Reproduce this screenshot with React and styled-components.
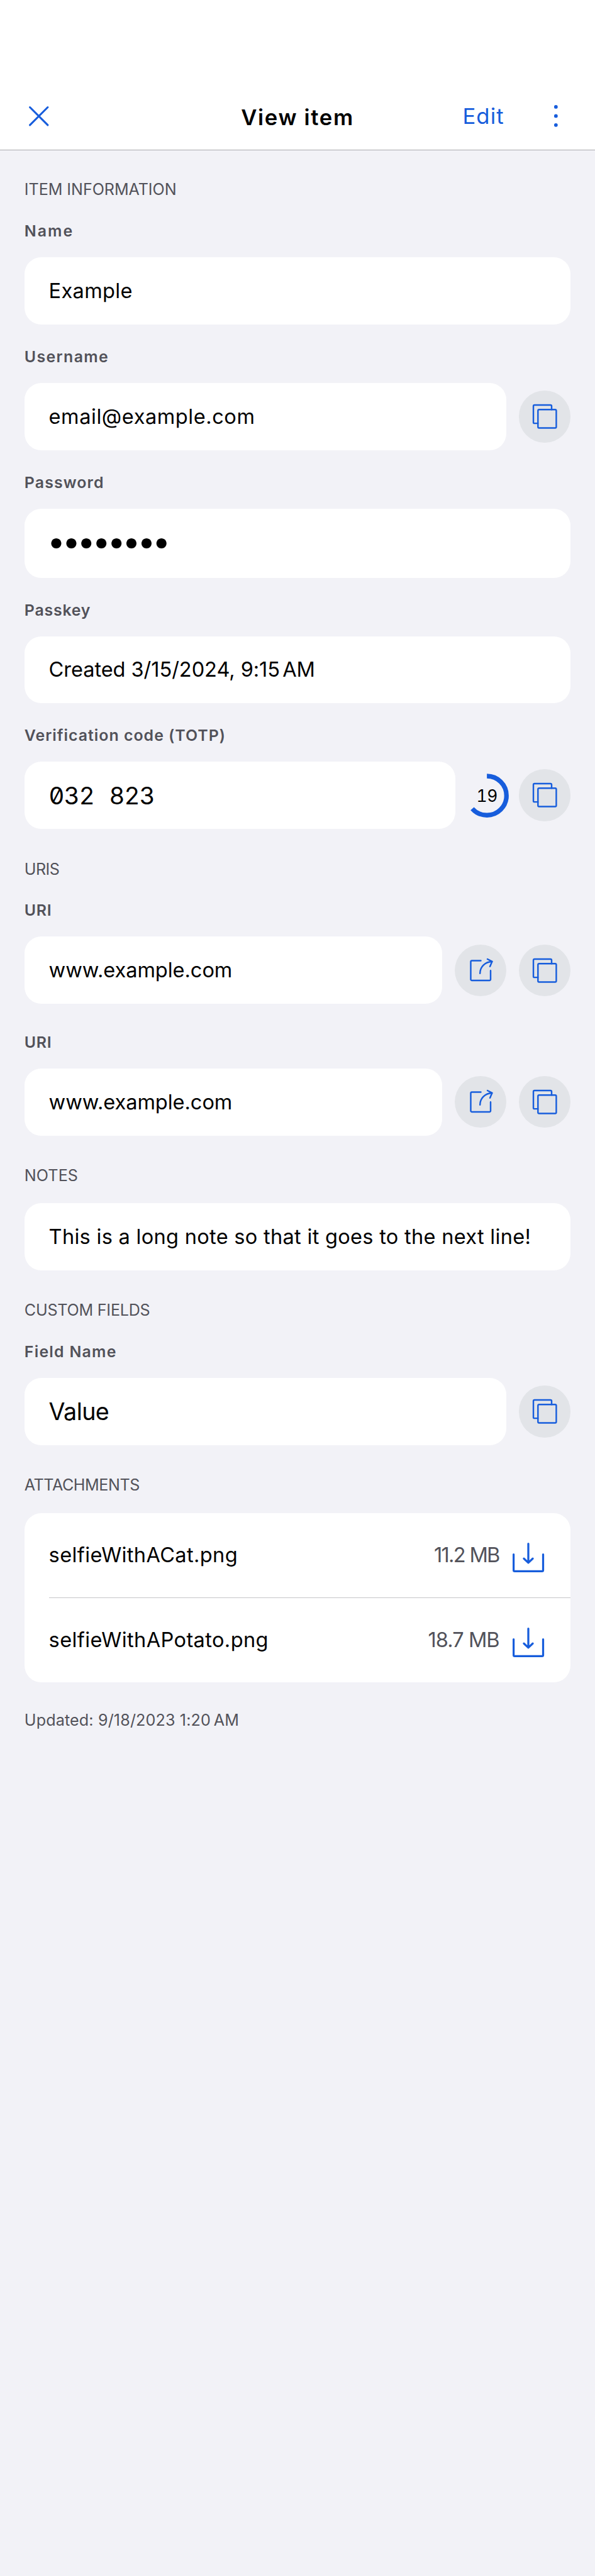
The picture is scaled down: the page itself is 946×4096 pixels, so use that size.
import React from "react";
import styled, { createGlobalStyle } from "styled-components";

// The screen is designed on a 390pt wide canvas and shown 946px wide.
const pt = (n) => `${((n * 946) / 390).toFixed(3)}px`;

const color = {
  page: "#f2f2f7",
  card: "#ffffff",
  text: "#000000",
  muted: "#52525a",
  accent: "#175ddc",
  button: "#e2e4e8",
  headerLine: "#a9a9ad",
  divider: "#c6c6c8",
};

const GlobalStyle = createGlobalStyle`
  *, *::before, *::after { box-sizing: border-box; }
  body {
    margin: 0;
    background: ${color.page};
    color: ${color.text};
    font-family: Inter, "Open Sans", sans-serif;
  }
  h1, h2, p { margin: 0; font-weight: 400; }
  button { border: 0; padding: 0; background: none; font: inherit; color: inherit; }
  svg { display: block; overflow: visible; }
`;

const Screen = styled.div`
  display: flex;
  flex-direction: column;
  min-height: 4096px;
  background: ${color.page};
`;

const Header = styled.header`
  padding-top: ${pt(54)};
  background: ${color.card};
  border-bottom: 1px solid ${color.headerLine};
`;

const NavBar = styled.div`
  display: grid;
  grid-template-columns: 1fr auto 1fr;
  align-items: center;
  height: ${pt(44)};
  padding: 0 ${pt(24.4)} 0 ${pt(19)};
  color: ${color.accent};
`;

const CloseButton = styled.button`
  justify-self: start;
`;

const Title = styled.h1`
  padding: ${pt(1.2)} 0 0 ${pt(5.4)};
  color: ${color.text};
  font-size: 34.67px;
  font-weight: 600;
  line-height: ${pt(20)};
  letter-spacing: 1.64px;
  white-space: nowrap;
`;

const NavActions = styled.div`
  display: flex;
  align-items: center;
  justify-self: end;
  gap: ${pt(32.8)};
`;

const EditButton = styled.button`
  font-size: 34.67px;
  line-height: ${pt(20)};
  letter-spacing: 1.1px;
`;

const Content = styled.main`
  display: flex;
  flex-direction: column;
  gap: ${pt(18.333)};
  padding: ${pt(18)} ${pt(16)} 0;
`;

const Section = styled.section`
  display: flex;
  flex-direction: column;
`;

const SectionTitle = styled.h2`
  margin-bottom: ${(p) => pt(p.$tight ? 10 : 11.167)};
  color: ${color.muted};
  font-size: 25.14px;
  line-height: ${pt(16)};
  letter-spacing: ${(p) => p.$track}px;
`;

const FieldList = styled.div`
  display: flex;
  flex-direction: column;
  gap: ${(p) => pt(p.$loose ? 17.167 : 13.167)};
`;

const FieldBlock = styled.div`
  display: flex;
  flex-direction: column;
  gap: ${pt(9.167)};
`;

const Label = styled.p`
  color: ${color.muted};
  font-size: 24.92px;
  font-weight: 600;
  line-height: ${pt(16)};
  letter-spacing: ${(p) => p.$track}px;
`;

const FieldRow = styled.div`
  display: flex;
  align-items: center;
  gap: ${pt(8)};
`;

const Card = styled.div`
  display: flex;
  flex: 1;
  align-items: center;
  min-width: 0;
  height: ${(p) => pt(p.$tall ? 45.333 : 44)};
  padding: 0 ${pt(16)};
  border-radius: ${pt(11)};
  background: ${color.card};
`;

const Value = styled.span`
  font-size: ${(p) => (p.$large ? 37.66 : 32.56)}px;
  line-height: 1.2;
  letter-spacing: ${(p) => p.$track || 0}px;
  white-space: nowrap;
`;

const MutedValue = styled(Value)`
  color: ${color.muted};
`;

const NarrowSpace = styled.span`
  word-spacing: ${(p) => p.$by}px;
  white-space: pre;
`;

const Bullets = styled(Value)`
  margin-left: -2.6px;
  padding-bottom: 5px;
  font-size: 51.4px;
  line-height: 1;
  letter-spacing: -5px;
`;

const Code = styled(Value)`
  font-size: 38.4px;
  font-feature-settings: "zero", "tnum";
  letter-spacing: -0.8px;
  word-spacing: 14.1px;
`;

const RoundButton = styled.button`
  flex: none;
  width: ${pt(34)};
  height: ${pt(34)};
  border-radius: 50%;
  background: ${color.button};
`;

const Countdown = styled.div`
  display: grid;
  flex: none;
  place-items: center;
  width: ${pt(25.667)};
  height: ${pt(25.667)};

  > * { grid-area: 1 / 1; }
`;

const Seconds = styled.span`
  font-size: 26.4px;
  line-height: 1;
  letter-spacing: -0.5px;
  font-feature-settings: "tnum";
`;

const AttachmentList = styled.div`
  display: flex;
  flex-direction: column;
  padding-left: ${pt(16)};
  border-radius: ${pt(11)};
  background: ${color.card};
`;

const Attachment = styled.div`
  display: flex;
  align-items: center;
  height: ${pt(55.5)};
  padding-right: ${pt(17.333)};

  & + & {
    border-top: 1px solid ${color.divider};
  }
`;

const Spacer = styled.div`
  flex: 1;
`;

const DownloadButton = styled.button`
  flex: none;
  margin: ${pt(2.667)} 0 0 ${pt(8.8)};
`;

const Updated = styled.p`
  margin-top: ${pt(-1.133)};
  color: ${color.muted};
  font-size: 25.14px;
  line-height: ${pt(16)};
  letter-spacing: 0.14px;
`;

const Stroke = styled.g`
  fill: none;
  stroke: ${color.accent};
  stroke-linecap: round;
  stroke-linejoin: round;
`;

const CloseIcon = () => (
  <svg width={pt(13)} height={pt(13)} viewBox="0 0 39 39">
    <Stroke strokeWidth="3.8">
      <path d="M1.9 1.9 37 37M37 1.9 1.9 37" />
    </Stroke>
  </svg>
);

const MoreIcon = () => (
  <svg width={pt(2.333)} height={pt(14.333)} viewBox="0 0 7 43" fill={color.accent}>
    <circle cx="3.5" cy="3.6" r="3.6" />
    <circle cx="3.5" cy="21.5" r="3.6" />
    <circle cx="3.5" cy="39.4" r="3.6" />
  </svg>
);

const CopyIcon = () => (
  <svg width="100%" height="100%" viewBox="0 0 306 306">
    <Stroke strokeWidth="9">
      <path d="M193 112V92a6.5 6.5 0 0 0-6.5-6.5H92a6.5 6.5 0 0 0-6.5 6.5v95a6.5 6.5 0 0 0 6.5 6.5h20" />
      <rect x="112.5" y="112.5" width="108" height="108" rx="6.5" />
    </Stroke>
  </svg>
);

const LaunchIcon = () => (
  <svg width="100%" height="100%" viewBox="0 0 306 306">
    <Stroke strokeWidth="9">
      <path d="M154 94.5h-53a6.5 6.5 0 0 0-6.5 6.5v104a6.5 6.5 0 0 0 6.5 6.5h104a6.5 6.5 0 0 0 6.5-6.5v-52" />
      <path d="M149 169.5C149 131 179 101 220 100" />
      <path d="M193 85.5 220.5 99.5 208 129" />
    </Stroke>
  </svg>
);

const DownloadIcon = () => (
  <svg width={pt(20.667)} height={pt(19.333)} viewBox="0 0 62 58">
    <Stroke strokeWidth="4">
      <path d="M2 23v31a2 2 0 0 0 2 2h54a2 2 0 0 0 2-2V23" />
      <path d="M30.9 2v37M22.2 31.2l8.7 8.2 8.7-8.2" />
    </Stroke>
  </svg>
);

const TimerRing = ({ left, period }) => {
  const length = 2 * Math.PI * 38.5;
  return (
    <svg width="100%" height="100%" viewBox="0 0 77 77">
      <circle
        cx="38.5"
        cy="38.5"
        r="38.5"
        fill="none"
        stroke={color.accent}
        strokeWidth="9"
        strokeDasharray={`${(length * left) / period} ${length}`}
        transform="rotate(-90 38.5 38.5)"
      />
    </svg>
  );
};

const CopyButton = () => (
  <RoundButton aria-label="Copy">
    <CopyIcon />
  </RoundButton>
);

const LaunchButton = () => (
  <RoundButton aria-label="Launch">
    <LaunchIcon />
  </RoundButton>
);

const Field = ({ label, track, tall, actions, children }) => (
  <FieldBlock>
    <Label $track={track}>{label}</Label>
    <FieldRow>
      <Card $tall={tall}>{children}</Card>
      {actions}
    </FieldRow>
  </FieldBlock>
);

const UriField = () => (
  <Field
    label="URI"
    track={0.63}
    actions={
      <>
        <LaunchButton />
        <CopyButton />
      </>
    }
  >
    <Value $track={-0.05}>www.example.com</Value>
  </Field>
);

const AttachmentRow = ({ name, nameTrack, size, sizeTrack }) => (
  <Attachment>
    <Value $track={nameTrack}>{name}</Value>
    <Spacer />
    <MutedValue $track={sizeTrack}>{size}</MutedValue>
    <DownloadButton aria-label="Download">
      <DownloadIcon />
    </DownloadButton>
  </Attachment>
);

export default function App() {
  return (
    <Screen>
      <GlobalStyle />
      <Header>
        <NavBar>
          <CloseButton aria-label="Close">
            <CloseIcon />
          </CloseButton>
          <Title>View item</Title>
          <NavActions>
            <EditButton>Edit</EditButton>
            <MoreIcon />
          </NavActions>
        </NavBar>
      </Header>

      <Content>
        <Section>
          <SectionTitle $track={-0.06}>ITEM INFORMATION</SectionTitle>
          <FieldList>
            <Field label="Name" track={2.01}>
              <Value $track={0.32}>Example</Value>
            </Field>
            <Field label="Username" track={1.355} actions={<CopyButton />}>
              <Value $track={0.55}>email@example.com</Value>
            </Field>
            <Field label="Password" track={1.1} tall>
              <Bullets>••••••••</Bullets>
            </Field>
            <Field label="Passkey" track={0.77}>
              <Value $track={-0.06}>
                Created 3/15/2024, 9:15<NarrowSpace $by={-5}> </NarrowSpace>AM
              </Value>
            </Field>
            <Field
              label="Verification code (TOTP)"
              track={0.98}
              actions={
                <>
                  <Countdown>
                    <TimerRing left={19} period={30} />
                    <Seconds>19</Seconds>
                  </Countdown>
                  <CopyButton />
                </>
              }
            >
              <Code>032 823</Code>
            </Field>
          </FieldList>
        </Section>

        <Section>
          <SectionTitle $track={-0.55}>URIS</SectionTitle>
          <FieldList $loose>
            <UriField />
            <UriField />
          </FieldList>
        </Section>

        <Section>
          <SectionTitle $tight $track={0.085}>NOTES</SectionTitle>
          <FieldRow>
            <Card>
              <Value $track={0.286}>This is a long note so that it goes to the next line!</Value>
            </Card>
          </FieldRow>
        </Section>

        <Section>
          <SectionTitle $track={-0.234}>CUSTOM FIELDS</SectionTitle>
          <Field label="Field Name" track={1.23} actions={<CopyButton />}>
            <Value $large $track={-0.585}>Value</Value>
          </Field>
        </Section>

        <Section>
          <SectionTitle $tight $track={-0.453}>ATTACHMENTS</SectionTitle>
          <AttachmentList>
            <AttachmentRow name="selfieWithACat.png" nameTrack={0.375} size="11.2 MB" sizeTrack={-1.7} />
            <AttachmentRow name="selfieWithAPotato.png" nameTrack={0.39} size="18.7 MB" sizeTrack={-0.95} />
          </AttachmentList>
        </Section>

        <Updated>
          Updated: 9/18/2023 1:20<NarrowSpace $by={-2.5}> </NarrowSpace>AM
        </Updated>
      </Content>
    </Screen>
  );
}
